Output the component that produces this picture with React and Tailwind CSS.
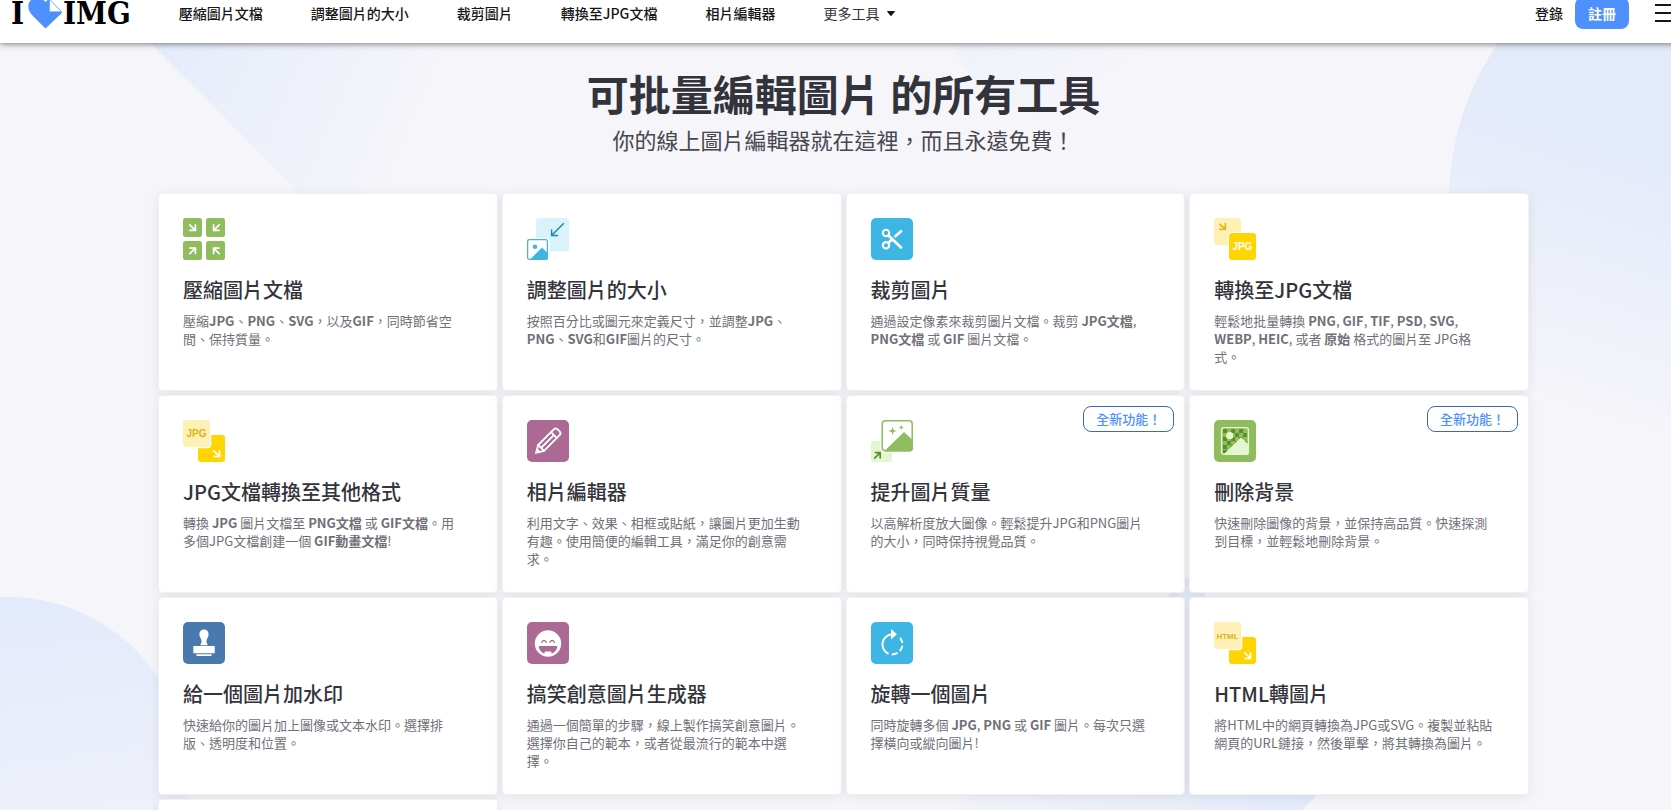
import { clsx } from 'clsx';

const navLinks = ['壓縮圖片文檔', '調整圖片的大小', '裁剪圖片', '轉換至JPG文檔', '相片編輯器'];

const Svg = ({ children }) => (
  <svg className="w-[42px] h-[42px] block overflow-visible" viewBox="0 0 42 42" fill="none" aria-hidden="true">
    {children}
  </svg>
);

const CompressIcon = () => (
  <Svg>
    <rect width="19" height="19" rx="2.5" fill="#8fbc5d" />
    <rect x="23" width="19" height="19" rx="2.5" fill="#8fbc5d" />
    <rect y="23" width="19" height="19" rx="2.5" fill="#8fbc5d" />
    <rect x="23" y="23" width="19" height="19" rx="2.5" fill="#8fbc5d" />
    <path
      d="M6.3 6.3L12.3 12.3M12.4 6.3V12.4H6.3M36.7 6.3L30.7 12.3M30.6 6.3V12.4H36.7M6.3 36.2L12.3 30.2M6.3 30.1H12.4V36.2M36.7 36.2L30.7 30.2M36.7 30.1H30.6V36.2"
      stroke="#fff"
      strokeWidth="1.7"
    />
  </Svg>
);

const ResizeIcon = () => (
  <Svg>
    <rect x="9" width="33" height="33.5" rx="3" fill="#daf2f9" />
    <rect x="-1" y="20" width="23.5" height="23" rx="3" fill="#fff" />
    <rect x="0.6" y="21.6" width="19.8" height="19.8" rx="1.8" fill="#fff" stroke="#4bb2d8" strokeWidth="1.3" />
    <path d="M3 41.5L15 29.5L21 35.5V39.5Q21 42 18.5 42H3Z" fill="#3db5e0" />
    <circle cx="8" cy="28.8" r="2.3" fill="#4bb2d8" />
    <path d="M36.8 5.2L24.8 17.2M24.6 11.5V17.5H31" stroke="#1f87ad" strokeWidth="1.5" />
  </Svg>
);

const CropIcon = () => (
  <Svg>
    <rect width="42" height="42" rx="5" fill="#3db6e3" />
    <circle cx="15" cy="15" r="3.2" stroke="#fff" strokeWidth="2.1" />
    <circle cx="15" cy="27.3" r="3.2" stroke="#fff" strokeWidth="2.1" />
    <path d="M17.3 17.2L30.8 30.2M17.3 25L21.5 21M23.6 19L30.8 12.6" stroke="#fff" strokeWidth="2.7" />
  </Svg>
);

const ToJpgIcon = () => (
  <Svg>
    <rect width="27" height="27" rx="3" fill="#fff1b5" />
    <path d="M5.3 5.8L11.3 11M11.4 5V11.3H5.2" stroke="#e0b91d" strokeWidth="1.7" />
    <rect x="14" y="14" width="29" height="29" rx="4" fill="#fff" />
    <rect x="15" y="15" width="27" height="27" rx="3" fill="#ffd500" />
    <text x="28.4" y="32" fontSize="10" fontWeight="700" fontFamily="Liberation Sans, sans-serif" textAnchor="middle" fill="#fff">
      JPG
    </text>
  </Svg>
);

const FromFormatIcon = ({ label, size }) => (
  <Svg>
    <rect x="15" y="15" width="27" height="27" rx="3" fill="#ffd500" />
    <path d="M30.3 30.3L36.4 36.4M36.5 30.2V36.5H30.3" stroke="#fff" strokeWidth="1.7" />
    <rect x="-1" y="-1" width="29.3" height="29.3" rx="4" fill="#fff" />
    <rect width="27" height="27" rx="3" fill="#fff1b5" />
    <text x="13.5" y="17" fontSize={size} fontWeight="700" fontFamily="Liberation Sans, sans-serif" textAnchor="middle" fill="#d9b31d">
      {label}
    </text>
  </Svg>
);

const EditorIcon = () => (
  <Svg>
    <rect width="42" height="42" rx="5" fill="#ab6993" />
    <g stroke="#fff" strokeWidth="1.8" strokeLinejoin="round" strokeLinecap="round">
      <path d="M9 33L11.2 25L27 9.2Q28.700 7.700 30.400 9.200L32.800 11.600Q34.300 13.300 32.800 14.900L17 30.800L9 33Z" />
      <path d="M11.2 25L17 30.800M24 12.200L29.800 18M14 28L26.800 15.200" />
    </g>
    <path d="M9 33L10.4 28.400L13.600 31.600Z" fill="#fff" />
  </Svg>
);

const UpscaleIcon = () => (
  <Svg>
    <rect y="21" width="21" height="21" rx="2" fill="#e4f5d2" />
    <path d="M3.2 38.6L9 32.8M3.8 32.6H9.2V38.6" stroke="#5b9029" strokeWidth="1.7" />
    <rect x="9.5" y="-1" width="33.5" height="33.5" rx="4" fill="#fff" />
    <rect x="11.2" y="0.7" width="30" height="30" rx="3" fill="#fff" stroke="#8fbc5d" strokeWidth="1.5" />
    <path d="M13.5 31L33 12L42 20.5V28Q42 31.4 38.6 31.4H13.5Z" fill="#8fbc5d" />
    <path
      d="M21.5 6.8L22.5 10L25.7 11L22.5 12L21.5 15.2L20.5 12L17.3 11L20.5 10ZM30.3 5L31 6.8L32.8 7.5L31 8.2L30.3 10L29.6 8.2L27.8 7.5L29.6 6.8Z"
      fill="#8fbc5d"
    />
  </Svg>
);

const BackgroundIcon = () => (
  <Svg>
    <rect width="42" height="42" rx="5" fill="#8fbc5d" />
    <path
      d="M9 9h4v4h-4zM17 9h4v4h-4zM25 9h4v4h-4zM13 13h4v4h-4zM21 13h4v4h-4zM29 13h4v4h-4zM9 17h4v4h-4zM17 17h4v4h-4zM25 17h4v4h-4zM13 21h4v4h-4zM21 21h4v4h-4zM29 21h4v4h-4zM9 25h4v4h-4zM17 25h4v4h-4zM9 30h4v4h-4z"
      fill="#5b9029"
    />
    <rect x="7.6" y="7.6" width="26.8" height="26.8" rx="2.6" stroke="#e4f5d2" strokeWidth="1.4" />
    <circle cx="15.7" cy="15.7" r="3.6" fill="#e4f5d2" />
    <path d="M9.5 34.5L27 17.3L35 25V32Q35 35 32 35H9.5Z" fill="#e4f5d2" />
  </Svg>
);

const StampIcon = () => (
  <Svg>
    <rect width="42" height="42" rx="5" fill="#4a7aad" />
    <path
      d="M21 7.5C24 7.5 25.6 9.8 25.6 12.4C25.6 15.2 23.4 16.5 23.4 19.2C23.4 21.2 24.6 21.4 24.6 23.2H17.4C17.4 21.4 18.6 21.2 18.6 19.2C18.6 16.5 16.4 15.2 16.4 12.4C16.4 9.8 18 7.5 21 7.5Z"
      fill="#fff"
    />
    <rect x="10.3" y="24" width="21.5" height="7.2" rx="0.8" fill="#fff" />
    <rect x="13.2" y="32.2" width="15.6" height="1.7" rx="0.8" fill="#fff" />
  </Svg>
);

const MemeIcon = () => (
  <Svg>
    <rect width="42" height="42" rx="5" fill="#ab6993" />
    <circle cx="21" cy="21.5" r="13.2" fill="#fff" />
    <path d="M14.7 20.3Q17 16.6 19.3 20.3M22.9 20.3Q25.2 16.6 27.5 20.3" stroke="#ab6993" strokeWidth="1.3" strokeLinecap="round" />
    <path d="M11.8 24H30.2C30.2 28.5 26.6 32 21 32C15.4 32 11.8 28.5 11.8 24Z" fill="#ab6993" />
    <path d="M16.8 31.2Q18.8 28.4 21 29.8Q23.2 28.4 25.2 31.2Q21 33 16.8 31.2Z" fill="#fff" />
  </Svg>
);

const RotateIcon = () => (
  <Svg>
    <rect width="42" height="42" rx="5" fill="#3db6e3" />
    <path d="M17.6 31.9A10.3 10.3 0 0 1 20.8 12.2" stroke="#fff" strokeWidth="2" />
    <path d="M20 7L26 12.2L20 17.4Z" fill="#fff" />
    <path
      d="M29.5 16.6A10.3 10.3 0 0 1 31.2 20.3M31.2 24.4A10.3 10.3 0 0 1 29.3 28.4M25.9 31.2A10.3 10.3 0 0 1 21.4 32.4"
      stroke="#fff"
      strokeWidth="2"
      strokeLinecap="round"
    />
  </Svg>
);

const tools = [
  {
    title: '壓縮圖片文檔',
    icon: <CompressIcon />,
    text: <>壓縮<b>JPG</b>、<b>PNG</b>、<b>SVG</b>，以及<b>GIF</b>，同時節省空間、保持質量。</>,
  },
  {
    title: '調整圖片的大小',
    icon: <ResizeIcon />,
    text: <>按照百分比或圖元來定義尺寸，並調整<b>JPG</b>、<b>PNG</b>、<b>SVG</b>和<b>GIF</b>圖片的尺寸。</>,
  },
  {
    title: '裁剪圖片',
    icon: <CropIcon />,
    text: <>通過設定像素來裁剪圖片文檔。裁剪 <b>JPG文檔</b>, <b>PNG文檔</b> 或 <b>GIF</b> 圖片文檔。</>,
  },
  {
    title: '轉換至JPG文檔',
    icon: <ToJpgIcon />,
    text: (
      <>
        輕鬆地批量轉換 <b>PNG</b>, <b>GIF</b>, <b>TIF</b>, <b>PSD</b>, <b>SVG</b>, <b>WEBP</b>, <b>HEIC</b>, 或者{' '}
        <b>原始</b> 格式的圖片至 JPG格式。
      </>
    ),
  },
  {
    title: 'JPG文檔轉換至其他格式',
    icon: <FromFormatIcon label="JPG" size="10" />,
    text: <>轉換 <b>JPG</b> 圖片文檔至 <b>PNG文檔</b> 或 <b>GIF文檔</b>。用多個JPG文檔創建一個 <b>GIF動畫文檔</b>!</>,
  },
  {
    title: '相片編輯器',
    icon: <EditorIcon />,
    text: '利用文字、效果、相框或貼紙，讓圖片更加生動有趣。使用簡便的編輯工具，滿足你的創意需求。',
  },
  {
    title: '提升圖片質量',
    icon: <UpscaleIcon />,
    isNew: true,
    text: '以高解析度放大圖像。輕鬆提升JPG和PNG圖片的大小，同時保持視覺品質。',
  },
  {
    title: '刪除背景',
    icon: <BackgroundIcon />,
    isNew: true,
    text: '快速刪除圖像的背景，並保持高品質。快速探測到目標，並輕鬆地刪除背景。',
  },
  {
    title: '給一個圖片加水印',
    icon: <StampIcon />,
    text: '快速給你的圖片加上圖像或文本水印。選擇排版、透明度和位置。',
  },
  {
    title: '搞笑創意圖片生成器',
    icon: <MemeIcon />,
    text: '通過一個簡單的步驟，線上製作搞笑創意圖片。選擇你自己的範本，或者從最流行的範本中選擇。',
  },
  {
    title: '旋轉一個圖片',
    icon: <RotateIcon />,
    text: <>同時旋轉多個 <b>JPG</b>, <b>PNG</b> 或 <b>GIF</b> 圖片。每次只選擇橫向或縱向圖片!</>,
  },
  {
    title: 'HTML轉圖片',
    icon: <FromFormatIcon label="HTML" size="8" />,
    text: '將HTML中的網頁轉換為JPG或SVG。複製並粘貼網頁的URL鏈接，然後單擊，將其轉換為圖片。',
  },
];

const cardClass = 'relative block min-h-[198px] rounded-[4px] border border-[#f0f0f5] bg-white shadow-[0_2px_12px_rgba(0,0,0,0.08)]';

const ToolCard = ({ tool }) => (
  <a href="#" className={clsx(cardClass, 'py-6 pl-6 pr-8')}>
    {tool.icon}
    {tool.isNew && (
      <span className="absolute right-[10px] top-[10px] rounded-lg border border-[#3b6cb3] px-3 text-[13px] leading-6 font-medium text-[#4d90fe]">
        全新功能！
      </span>
    )}
    <h3 className="mt-[18px] text-xl leading-6 font-medium text-[#33333b]">{tool.title}</h3>
    <p className="mt-[10px] text-[13px] leading-[18px] text-[#707078]">{tool.text}</p>
  </a>
);

const Logo = () => (
  <a href="#" aria-label="I love IMG" className="flex items-center font-['DejaVu_Serif_Condensed','DejaVu_Serif',serif] text-[31px] leading-none font-bold text-black">
    I
    <svg className="ml-1 mr-px h-[38px] w-[34px]" viewBox="0 0 34 38" fill="none" aria-hidden="true">
      <path d="M17.5 34.500L4.500 21.500C-1 16 -1 9 4 5C9 2 14.500 4 17.500 8L21 4.500V18H34C33.500 19 33 19.800 32 20.800Z" fill="#4d90fe" />
      <path d="M21.500 5L33.500 17.800H21.500Z" fill="#fff" stroke="#4d90fe" strokeWidth="0.8" />
    </svg>
    IMG
  </a>
);

const Header = () => (
  <header className="relative -mt-[17px] flex h-[60px] items-center bg-white pl-[11px] shadow-[0_1px_6px_rgba(0,0,0,0.5)]">
    <Logo />
    <nav className="ml-[48px] flex items-center gap-12 text-sm font-medium text-[#161616]">
      {navLinks.map((link) => (
        <a key={link} href="#">
          {link}
        </a>
      ))}
      <button type="button" className="flex items-center gap-2 font-normal text-[#33333b]">
        更多工具
        <svg className="h-[5px] w-[8px]" viewBox="0 0 8 5" aria-hidden="true">
          <path d="M0.500 0H7.500Q8.200 0.300 7.600 1L4.500 4.700Q4 5.200 3.500 4.700L0.400 1Q-0.200 0.300 0.500 0Z" fill="#161616" />
        </svg>
      </button>
    </nav>
    <div className="ml-auto flex items-center text-sm">
      <a href="#" className="font-medium text-[#161616]">
        登錄
      </a>
      <a href="#" className="ml-3 rounded-lg bg-[#4d90fe] px-[13px] py-[6px] font-bold text-white">
        註冊
      </a>
      <button type="button" aria-label="選單" className="ml-[26px] flex w-8 flex-col gap-[6px]">
        <span className="h-[2px] w-5 bg-[#161616]" />
        <span className="h-[2px] w-5 bg-[#161616]" />
        <span className="h-[2px] w-5 bg-[#161616]" />
      </button>
    </div>
  </header>
);

// soft geometric shapes behind the tool grid
const Backdrop = () => (
  <svg className="absolute left-0 top-0 h-[810px] w-[1687px]" viewBox="0 0 1687 810" aria-hidden="true">
    <defs>
      <linearGradient id="slope" gradientUnits="userSpaceOnUse" x1="160" y1="50" x2="400" y2="150">
        <stop stopColor="#e5ecfa" />
        <stop offset="1" stopColor="#f5f5fa" />
      </linearGradient>
      <linearGradient id="top" x1="0" y1="0" x2="0.6" y2="1">
        <stop stopColor="#e6edfb" />
        <stop offset="0.9" stopColor="#f5f5fa" />
      </linearGradient>
      <linearGradient id="right" gradientUnits="userSpaceOnUse" x1="1640" y1="150" x2="1560" y2="400">
        <stop stopColor="#e3eafa" />
        <stop offset="1" stopColor="#f5f5fa" />
      </linearGradient>
      <linearGradient id="left" gradientUnits="userSpaceOnUse" x1="40" y1="600" x2="90" y2="950">
        <stop stopColor="#e3eafb" />
        <stop offset="1" stopColor="#f5f5fa" />
      </linearGradient>
      <linearGradient id="bottom" gradientUnits="userSpaceOnUse" x1="1310" y1="700" x2="900" y2="860">
        <stop stopColor="#e1e9fa" />
        <stop offset="1" stopColor="#f5f5fa" />
      </linearGradient>
    </defs>
    <path d="M107 0L307 200H620V0Z" fill="url(#slope)" />
    <circle cx="1062" cy="0" r="118" fill="url(#top)" />
    <circle cx="1725" cy="200" r="276" fill="url(#right)" />
    <circle cx="8" cy="777" r="180" fill="url(#left)" />
    <path d="M1187 577L1361 751L1000 1112L826 938Z" fill="url(#bottom)" />
  </svg>
);

const App = () => (
  <div
    lang="zh-Hant"
    className="relative h-screen overflow-hidden bg-[#f5f5fa] font-['Noto_Sans_CJK_TC','Open_Sans',sans-serif]"
  >
    <Backdrop />
    <div className="relative -mr-4">
      <Header />
      <main className="px-[158px] pt-6">
        <h1 className="text-center text-[42px] leading-[52px] font-bold text-[#33333b]">可批量編輯圖片 的所有工具</h1>
        <h2 className="mt-1 text-center text-[22px] leading-8 text-[#47474f]">你的線上圖片編輯器就在這裡，而且永遠免費！</h2>
        <section className="mt-[38px] grid grid-cols-4 gap-1">
          {tools.map((tool) => (
            <ToolCard key={tool.title} tool={tool} />
          ))}
          <div className={cardClass} />
        </section>
      </main>
    </div>
  </div>
);

export default App;
